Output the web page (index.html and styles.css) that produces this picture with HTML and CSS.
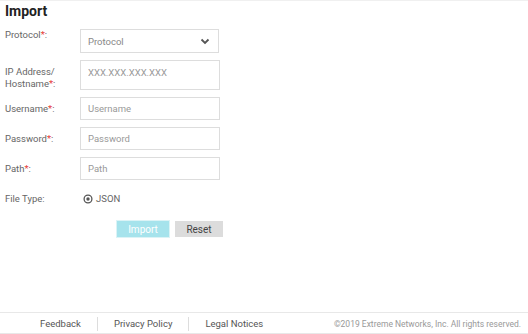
FILE: index.html
```html
<!DOCTYPE html>
<html>
<head>
    <title>Import</title>
    <link rel="stylesheet" href="styles.css">
</head>
<body>
    <div class="page">
        <h1 class="title">Import</h1>
        <!-- Form rows -->
        <div class="form">
            <div class="row first">
                <label class="lbl">Protocol<span class="req">*</span>:</label>
                <div class="select">
                    <span>Protocol</span>
                    <svg width="10" height="7" viewBox="0 0 10 7"><path d="M1.5 1.5 L5 5 L8.5 1.5" fill="none" stroke="#555" stroke-width="1.8"/></svg>
                </div>
            </div>
            <div class="row">
                <label class="lbl">IP Address/<br>Hostname<span class="req">*</span>:</label>
                <input type="text" class="inp tall" placeholder="XXX.XXX.XXX.XXX">
            </div>
            <div class="row">
                <label class="lbl">Username<span class="req">*</span>:</label>
                <input type="text" class="inp" placeholder="Username">
            </div>
            <div class="row">
                <label class="lbl">Password<span class="req">*</span>:</label>
                <input type="text" class="inp" placeholder="Password">
            </div>
            <div class="row">
                <label class="lbl">Path<span class="req">*</span>:</label>
                <input type="text" class="inp" placeholder="Path">
            </div>
            <div class="row ftype">
                <label class="lbl">File Type:</label>
                <div class="radio">
                    <svg width="10" height="10" viewBox="0 0 10 10"><circle cx="5" cy="5" r="3.9" fill="none" stroke="#555" stroke-width="1.3"/><circle cx="5" cy="5" r="1.7" fill="#555"/></svg>
                    <span>JSON</span>
                </div>
            </div>
            <div class="btns">
                <button class="btn imp">Import</button>
                <button class="btn rst">Reset</button>
            </div>
        </div>
        <div class="footer">
            <div class="links">
                <a>Feedback</a>
                <a>Privacy Policy</a>
                <a>Legal Notices</a>
            </div>
            <div class="copy">©2019 Extreme Networks, Inc. All rights reserved.</div>
        </div>
    </div>
</body>
</html>
```

FILE: styles.css
```css
body {
    margin: 0;
    font-family: Roboto, "Liberation Sans", sans-serif;
    color: #666;
    background: #fff;
}
.page {
    height: 334px;
    display: flex;
    flex-direction: column;
    border-top: 1px solid #f0f0f0;
    box-sizing: border-box;
}
.title {
    margin: 0;
    padding: 1px 5px 0;
    font-size: 14px;
    line-height: 18px;
    font-weight: 700;
    color: #222;
}
.form {
    padding: 9px 5px 0;
}
.row {
    display: flex;
    align-items: flex-start;
    margin-bottom: 7px;
}
.lbl {
    width: 75px;
    font-size: 9.5px;
    line-height: 12px;
    padding-top: 6px;
}
.first .lbl {
    padding-top: 0;
}
.req {
    color: #e53935;
}
.select,
.inp {
    box-sizing: border-box;
    width: 140px;
    height: 23px;
    border: 1px solid #ddd;
    padding: 0 7px;
    font-family: inherit;
    font-size: 9.5px;
    color: #555;
    outline: none;
}
.select {
    width: 139px;
    height: 24px;
    display: flex;
    align-items: center;
    justify-content: space-between;
    color: #888;
}
.select svg {
    margin-right: 1px;
}
.inp::placeholder {
    color: #999;
}
.tall {
    height: 30px;
    padding-bottom: 6px;
}
.ftype {
    margin-top: 13px;
    margin-bottom: 16px;
}
.ftype .lbl {
    padding-top: 0;
}
.radio {
    display: flex;
    align-items: center;
    gap: 3px;
    font-size: 9.5px;
    line-height: 12px;
    padding-left: 3px;
}
.btns {
    display: flex;
    gap: 6px;
    padding-left: 112px;
}
.btn {
    height: 16px;
    border: none;
    padding: 0;
    font-family: inherit;
    font-size: 10px;
}
.imp {
    width: 52px;
    background: #a6e3ec;
    color: #fff;
    outline: 1px solid #dbf3f6;
}
.rst {
    width: 48px;
    background: #dcdcdc;
    color: #444;
}
.footer {
    margin-top: auto;
    height: 18px;
    border-top: 1px solid #e8e8e8;
    border-bottom: 1px solid #e8e8e8;
    display: flex;
    align-items: center;
    justify-content: space-between;
    font-size: 9.5px;
    padding-right: 7px;
    padding-top: 2px;
}
.links {
    display: flex;
    padding-left: 24px;
}
.links a {
    padding: 1px 16px;
    color: #555;
    line-height: 12px;
}
.links a + a {
    border-left: 1px solid #ddd;
}
.copy {
    color: #999;
    font-size: 8.5px;
}
```
